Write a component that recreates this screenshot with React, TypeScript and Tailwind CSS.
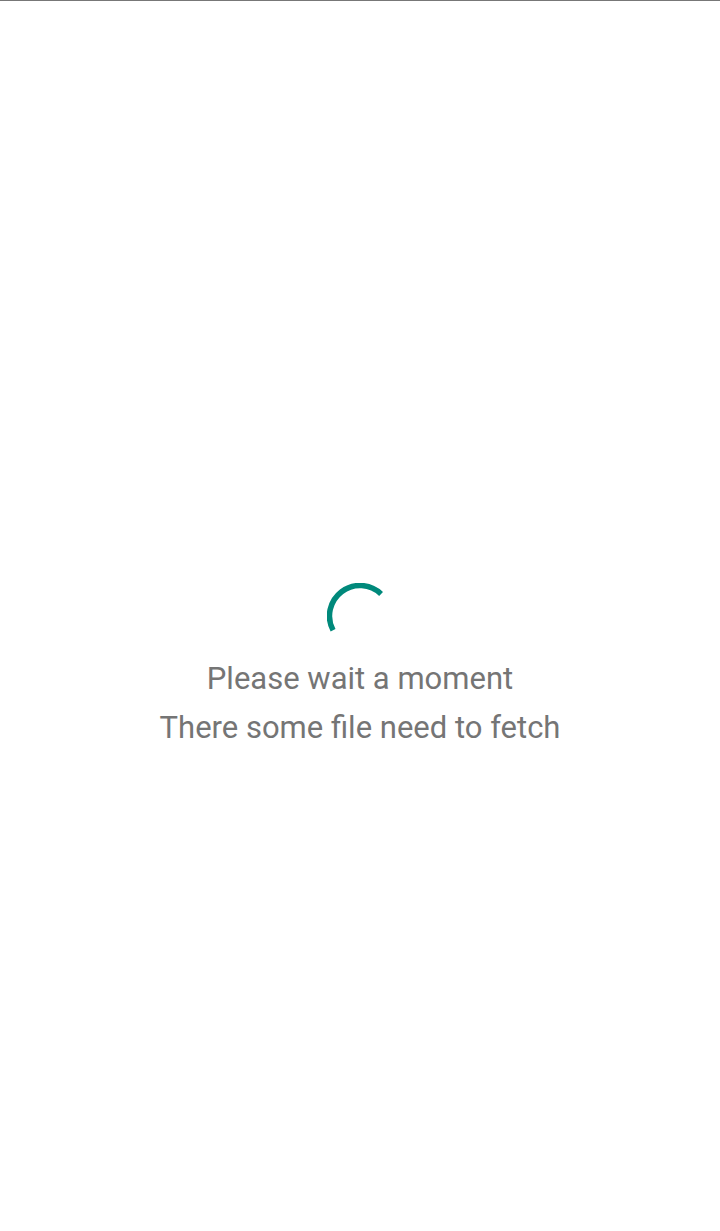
export default function App() {
  return (
    <div className="min-h-screen w-full bg-white border-t border-[#777777] font-['Roboto',sans-serif]">
      <div className="flex flex-col items-center pt-[582px]">
        {/* loading spinner */}
        <svg width="66" height="66" viewBox="0 0 66 66" className="block">
          <path
            d="M54.07 10.95 A30.5 30.5 0 0 0 6.07 47.32"
            fill="none"
            stroke="#00897b"
            strokeWidth="5.5"
          />
        </svg>
        <div className="mt-[5px] text-center text-[31px] leading-[49px] text-[#757575]">
          <p>Please wait a moment</p>
          <p>There some file need to fetch</p>
        </div>
      </div>
    </div>
  );
}
